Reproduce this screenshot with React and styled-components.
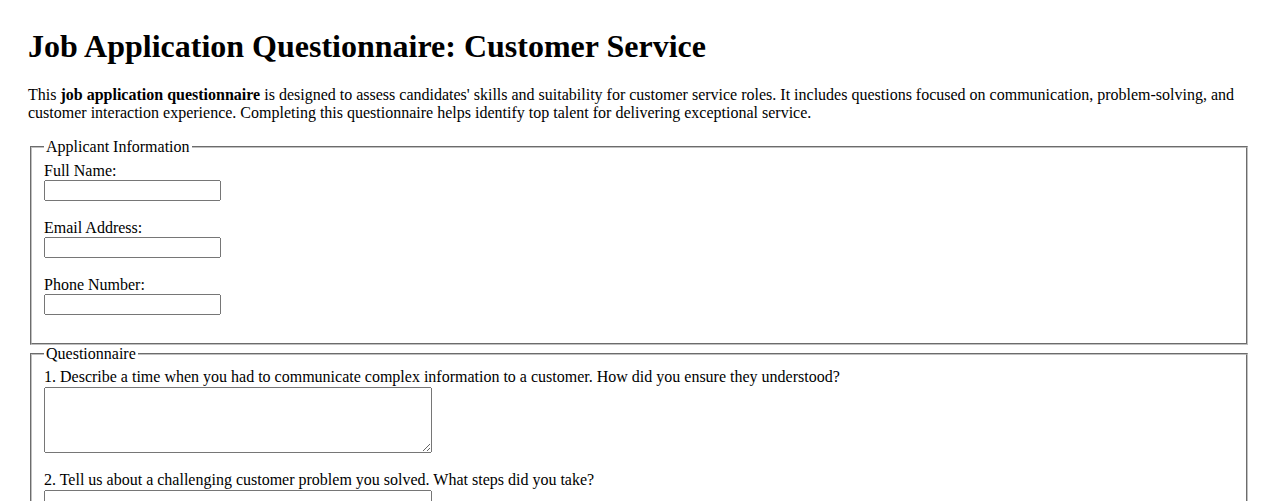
import React from 'react';
import styled, { createGlobalStyle } from 'styled-components';

const GlobalStyle = createGlobalStyle`
  body {
    margin: 0;
    font-family: "Liberation Serif", "Times New Roman", serif;
    font-size: 16px;
    color: #000;
    background: #fff;
  }
`;

const Page = styled.div`
  padding: 28px;
`;

const Title = styled.h1`
  font-size: 32px;
  font-weight: bold;
  margin: 0 0 21px;
  line-height: normal;
`;

const Intro = styled.p`
  margin: 0 0 16px;
  line-height: normal;
`;

const Section = styled.fieldset`
  margin: 0 2px;
  padding: 5.6px 12px 10px;
  border: 2px groove rgb(192, 192, 192);
`;

const Legend = styled.legend`
  padding: 0 2px;
`;

const Field = styled.div`
  margin-bottom: 18px;
`;

const Label = styled.label`
  display: block;
  line-height: normal;
  margin-bottom: ${(p) => (p.$wide ? '1px' : '0')};
`;

const TextInput = styled.input`
  display: block;
  box-sizing: border-box;
  width: 177px;
  height: 21px;
  margin: 0;
`;

const Answer = styled.textarea`
  display: block;
  box-sizing: border-box;
  width: 388px;
  height: 66px;
  margin: 0;
`;

const Submit = styled.button`
  margin-top: 12px;
`;

const applicant = [
  { id: 'name', label: 'Full Name:', type: 'text' },
  { id: 'email', label: 'Email Address:', type: 'email' },
  { id: 'phone', label: 'Phone Number:', type: 'tel' },
];

const questions = [
  '1. Describe a time when you had to communicate complex information to a customer. How did you ensure they understood?',
  '2. Tell us about a challenging customer problem you solved. What steps did you take?',
  '3. How do you handle an upset or frustrated customer?',
  '4. Why do you want to work in customer service?',
];

const App = () => {
  return (
    <Page>
      <GlobalStyle />
      <Title>Job Application Questionnaire: Customer Service</Title>
      <Intro>
        This <strong>job application questionnaire</strong> is designed to assess candidates' skills and
        suitability for customer service roles. It includes questions focused on communication,
        problem-solving, and customer interaction experience. Completing this questionnaire helps
        identify top talent for delivering exceptional service.
      </Intro>
      <form onSubmit={(e) => e.preventDefault()}>
        <Section>
          <Legend>Applicant Information</Legend>
          {applicant.map((f) => (
            <Field key={f.id}>
              <Label htmlFor={f.id}>{f.label}</Label>
              <TextInput id={f.id} type={f.type} />
            </Field>
          ))}
        </Section>
        <Section>
          <Legend>Questionnaire</Legend>
          {questions.map((q, i) => (
            <Field key={i}>
              <Label $wide htmlFor={`q${i + 1}`}>{q}</Label>
              <Answer id={`q${i + 1}`} />
            </Field>
          ))}
        </Section>
        <Submit type="submit">Submit Application</Submit>
      </form>
    </Page>
  );
};

export default App;
